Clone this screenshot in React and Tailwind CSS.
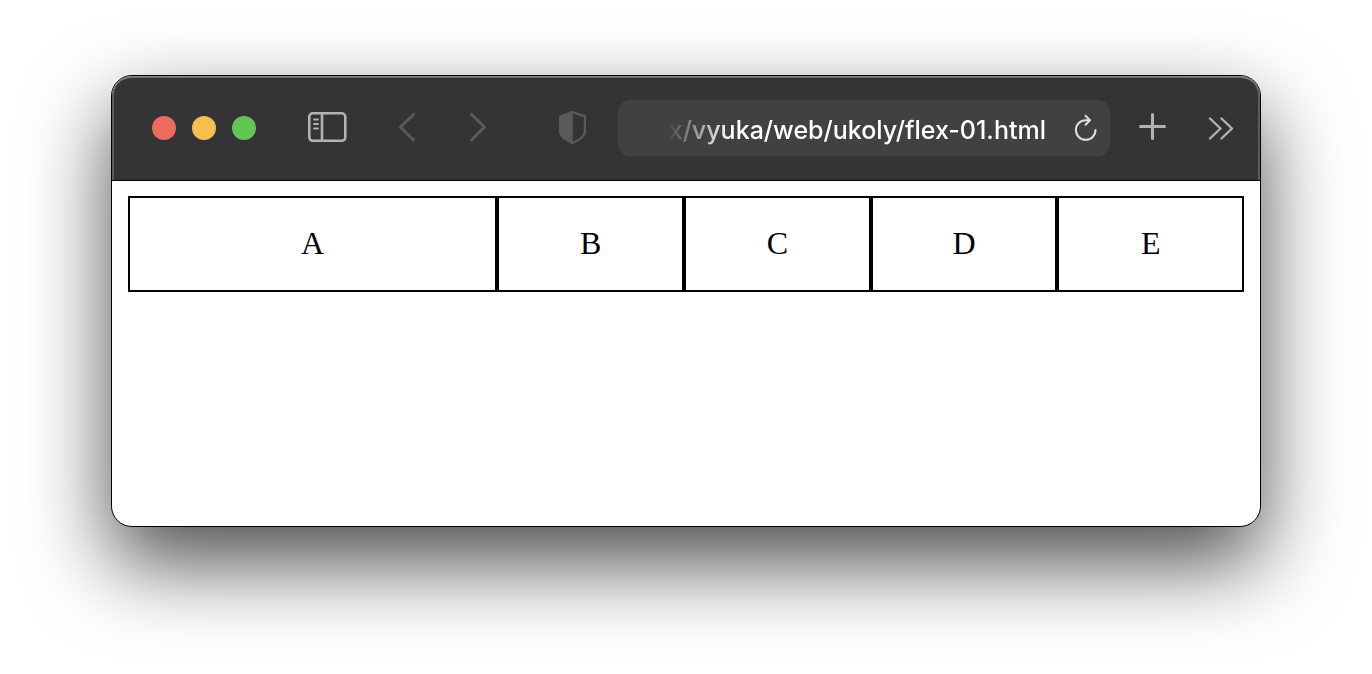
import { useState } from 'react';

const boxes = [
    { label: 'A', size: 'flex-[2]' },
    { label: 'B', size: 'flex-1' },
    { label: 'C', size: 'flex-1' },
    { label: 'D', size: 'flex-1' },
    { label: 'E', size: 'flex-1' },
];

const WindowControls = () => (
    <div className="flex gap-4">
        <button type="button" aria-label="Close" className="size-6 rounded-full bg-[#ed6a5f]" />
        <button type="button" aria-label="Minimize" className="size-6 rounded-full bg-[#f5bf4f]" />
        <button type="button" aria-label="Zoom" className="size-6 rounded-full bg-[#62c655]" />
    </div>
);

const AddressBar = () => {
    const [url, setUrl] = useState('ox/vyuka/web/ukoly/flex-01.html');

    return (
        <form
            onSubmit={(e) => e.preventDefault()}
            className="flex h-14 min-w-0 flex-1 items-center gap-7 rounded-xl bg-[#414142] pr-3"
        >
            <input
                type="text"
                name="url"
                aria-label="Address"
                value={url}
                onChange={(e) => setUrl(e.target.value)}
                className="h-full min-w-0 flex-1 bg-transparent pt-1 text-right font-['Inter',sans-serif] text-[25px] font-medium text-white outline-none [mask-image:linear-gradient(to_right,transparent_48px,black_112px)]"
            />
            <button type="submit" aria-label="Reload">
                <svg width="24" height="28" viewBox="0 0 24 28" fill="none" stroke="#dededf" strokeWidth="2" strokeLinecap="round" strokeLinejoin="round">
                    <path d="M21.500 16a9.800 9.800 0 1 1-9.800-9.800h4" />
                    <path d="M11.500 1.800l4.400 4.400-4.400 4.600" />
                </svg>
            </button>
        </form>
    );
};

const Toolbar = () => (
    <header className="box-content flex h-26 items-center rounded-t-[20px] border-b border-black bg-[#343436] pr-6 pl-10 shadow-[inset_0_1px_0_#858586,inset_0_2px_0_#6a6a6b,inset_2px_0_0_#5c5c5d,inset_-2px_0_0_#5c5c5d]">
        <WindowControls />
        <button type="button" aria-label="Show sidebar" className="ml-13">
            <svg width="39" height="32" viewBox="0 0 39 32" fill="none" stroke="#b3b3b5" strokeLinecap="round">
                <rect x="1.3" y="1.3" width="36" height="27.5" rx="3.5" strokeWidth="2.6" />
                <path d="M14 1.5v27" strokeWidth="2.6" strokeLinecap="butt" />
                <path d="M6 7.5h4M6 12h4M6 16.5h4" strokeWidth="1.8" />
            </svg>
        </button>
        <button type="button" aria-label="Back" className="ml-13">
            <svg width="17" height="30" viewBox="0 0 17 30" fill="none" stroke="#5a5a5c" strokeWidth="3" strokeLinecap="round" strokeLinejoin="round">
                <path d="M14.5 1.5L1.5 14l13 13" />
            </svg>
        </button>
        <button type="button" aria-label="Forward" className="ml-13">
            <svg width="19" height="30" viewBox="0 0 19 30" fill="none" stroke="#5a5a5c" strokeWidth="3" strokeLinecap="round" strokeLinejoin="round">
                <path d="M3.500 1.500l13 12.500-13 13" />
            </svg>
        </button>
        <button type="button" aria-label="Privacy report" className="ml-18">
            <svg width="27" height="34" viewBox="0 0 27 34" fill="none">
                <path d="M13.5 1.2L25.9 5.4V20c0 5-3.5 7.600-12.400 12C4.600 27.600 1.100 25 1.100 20V5.400z" stroke="#5a5a5c" strokeWidth="2.3" strokeLinejoin="round" />
                <path d="M13.8 1.2L1.1 5.4V20c0 5 3.5 7.6 12.7 12z" fill="#5a5a5c" />
            </svg>
        </button>
        <div className="ml-8 flex min-w-0 flex-1">
            <AddressBar />
        </div>
        <button type="button" aria-label="New tab" className="ml-7">
            <svg width="29" height="30" viewBox="0 0 29 30" fill="none" stroke="#b3b3b5" strokeWidth="3" strokeLinecap="round">
                <path d="M14.5 1.5v24M2.500 13.500h24" />
            </svg>
        </button>
        <button type="button" aria-label="More toolbar items" className="ml-10">
            <svg width="29" height="24" viewBox="0 0 29 24" fill="none" stroke="#b3b3b5" strokeWidth="2.3" strokeLinecap="round" strokeLinejoin="round">
                <path d="M3 2.500l10.500 10L3 22.500M14.500 2.500l10.500 10-10.500 10" />
            </svg>
        </button>
    </header>
);

const App = () => {
    return (
        <div className="min-h-screen bg-white px-[111px] pt-[75px] pb-36">
            <div className="rounded-[21px] border border-black bg-white shadow-[0_36px_84px_rgba(0,0,0,0.7)]">
                <Toolbar />
                <main className="min-h-[345px] px-4 pt-[15px]">
                    <div className="flex font-['Liberation_Serif',serif] text-[32px] leading-9 text-black">
                        {boxes.map((box) => (
                            <div key={box.label} className={`${box.size} border-2 border-black pt-[27px] pb-[29px] text-center`}>
                                {box.label}
                            </div>
                        ))}
                    </div>
                </main>
            </div>
        </div>
    );
};

export default App;
